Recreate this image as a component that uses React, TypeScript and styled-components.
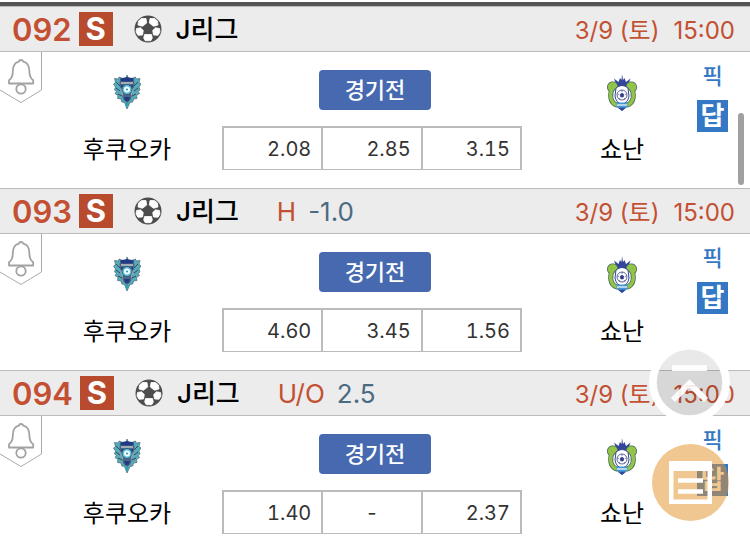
import React from "react";
import styled, { createGlobalStyle } from "styled-components";

const GlobalStyle = createGlobalStyle`
  * { box-sizing: border-box; }
  html { scrollbar-width: none; }
  body {
    margin: 0;
    background: #fff;
    color: #000;
    font-family: Inter, "Noto Sans CJK KR", sans-serif;
  }
  button { font: inherit; padding: 0; border: 0; background: none; cursor: pointer; }
`;

const Page = styled.main`
  padding-top: 2px;
`;

const TopRule = styled.div`
  height: 4px;
  background: #555;
`;

const GameHeader = styled.header`
  display: flex;
  align-items: center;
  height: 46px;
  padding: 0 15px 0 12px;
  background: #ececec;
  border-top: 1px solid #bbb;
  border-bottom: 1px solid #bbb;
  white-space: nowrap;
`;

const GameNumber = styled.span`
  font-size: 31px;
  font-weight: 600;
  color: #c35033;
`;

const SingleMark = styled.span`
  width: 34px;
  height: 34px;
  margin: 0 21px 0 7px;
  background: #b84a2d;
  color: #fff;
  font-size: 31px;
  font-weight: 700;
  line-height: 34px;
  text-align: center;
`;

const League = styled.h2`
  margin: 0 38px 0 14px;
  padding-top: 2px;
  font-size: 26px;
  font-weight: 500;
  line-height: 36px;
`;

const BetType = styled.span`
  margin-right: 12px;
  font-size: 26px;
  color: #c35033;
`;

const BetLine = styled.span`
  font-size: 26px;
  color: #4a6b82;
`;

const Kickoff = styled.time`
  display: flex;
  gap: 14px;
  margin-left: auto;
  padding-top: 4px;
  font-size: 24px;
  line-height: 36px;
  color: #c35033;
`;

const GameBody = styled.div`
  display: grid;
  grid-template-columns: 42px 180fr 300px 172fr 56px;
  height: 136px;
`;

const AlarmButton = styled.button`
  width: 42px;
  height: 52px;
  svg { display: block; }
`;

const Team = styled.div<{ $side: "home" | "away" }>`
  display: flex;
  flex-direction: column;
  align-items: center;
  padding: ${(p) => (p.$side === "home" ? "22px 10px 0 0" : "22px 0 0 28px")};
`;

const Crest = styled.div`
  height: 58px;
`;

const TeamName = styled.span`
  font-size: 24px;
  line-height: 36px;
  white-space: nowrap;
`;

const Center = styled.div`
  display: flex;
  flex-direction: column;
  align-items: center;
  padding-top: 18px;
  gap: 16px;
`;

const StatusButton = styled.button`
  width: 112px;
  height: 40px;
  margin-left: 6px;
  border-radius: 4px;
  background: #4769af;
  color: #fff;
  font-size: 22px;
  font-weight: 500;
  line-height: 40px;
`;

const OddsTable = styled.table`
  width: 100%;
  height: 44px;
  table-layout: fixed;
  border-collapse: separate;
  border-spacing: 0;
  border: solid #bbb;
  border-width: 2px 2px 1px 0;
`;

const Odd = styled.td<{ $empty: boolean }>`
  padding: ${(p) => (p.$empty ? "0" : "0 10px 0 0")};
  border-left: 2px solid #bbb;
  font-size: 20px;
  font-variant-numeric: tabular-nums;
  color: #333;
  text-align: ${(p) => (p.$empty ? "center" : "right")};
`;

const Picks = styled.div`
  display: flex;
  flex-direction: column;
  align-items: flex-start;
  padding: 8px 0 0 3px;
  gap: 8px;
`;

const PickButton = styled.button<{ $filled?: boolean }>`
  width: 31px;
  height: 32px;
  background: ${(p) => (p.$filled ? "#3478c5" : "transparent")};
  color: ${(p) => (p.$filled ? "#fff" : "#3478c5")};
  font-size: ${(p) => (p.$filled ? 26 : 22)}px;
  font-weight: ${(p) => (p.$filled ? 700 : 500)};
  line-height: 30px;
`;

const ScrollThumb = styled.div`
  position: fixed;
  top: 113px;
  right: 6px;
  width: 6px;
  height: 72px;
  border-radius: 3px;
  background: #a0a0a0;
`;

const FloatingButton = styled.button<{ $top?: boolean }>`
  position: fixed;
  right: ${(p) => (p.$top ? 20 : 21)}px;
  bottom: ${(p) => (p.$top ? 120 : 22)}px;
  width: ${(p) => (p.$top ? 81 : 77)}px;
  height: ${(p) => (p.$top ? 81 : 77)}px;
  border-radius: 50%;
  svg { display: block; }
`;

function BellTab() {
  return (
    <svg width="42" height="52" viewBox="0 0 42 52" fill="none">
      <path d="M41.5 0V38L21 50.5 0 38" stroke="#aaa" />
      <g stroke="#a2a2a2" strokeWidth="1.8" strokeLinejoin="round">
        <path d="M9 31.5V28.3Q12.8 25.6 12.8 19.5C12.8 13.5 15 10.6 18.8 9.7Q19.2 8 21 8T23.4 9.7C27.2 10.6 29.4 13.5 29.4 19.5Q29.4 25.6 33.2 28.3V31.5Z" />
        <circle cx="21" cy="37" r="4.7" />
      </g>
    </svg>
  );
}

function SoccerBall() {
  return (
    <svg width="28" height="28" viewBox="0 0 28 28">
      <circle cx="14" cy="14" r="13.5" fill="#4d4d4d" />
      <g fill="#fff" stroke="#fff" strokeWidth=".8" strokeLinejoin="round">
        <path d="M4.500 6 7.500 3.500 12 3.500 12.700 8 8.500 11.300 4 10Z" />
        <path d="M23.500 6 20.500 3.500 16 3.500 15.300 8 19.500 11.300 24 10Z" />
        <path d="M2.500 13.500 6.500 12.800 9.300 15.500 8.500 20 4 20.300 2 17Z" />
        <path d="M25.500 13.500 21.500 12.800 18.700 15.500 19.500 20 24 20.300 26 17Z" />
        <path d="M10.500 19.500h7l.800 3.500-1.500 2.700h-5.600L9.700 23Z" />
      </g>
    </svg>
  );
}

function HomeCrest() {
  return (
    <svg width="28" height="36" viewBox="0 0 28 36">
      <path d="M14 1 15.500 5l4-.800 3-1.200.500 2 4-.500-1 4 2 1.500-2 3 1 3-2 1.500 1.500 2-3 2 .500 3-3.500.500-.800 3-2.700.500L14 35l-2.500-6.500-2.700-.500L8 25l-3.500-.500.500-3-3-2 1.500-2-2-1.500 1-3-2-3 2-1.500-1-4 4 .500 .500-2 3 1.200 4 .800Z" fill="#55adba" stroke="#4c6475" strokeWidth=".7" />
      <path d="M7 5.500 14 4l7 1.500.500 4L20 18l-2.500 8-3.500 3-3.500-3L8 18 6.500 9.500Z" fill="#4f6480" />
      <path d="M7 4.500 14 3l7 1.500-1.500 3h-11ZM8 11l3 1-1 2-2-1ZM20 11l-3 1 1 2 2-1ZM11 23h6l-1.500 4h-3Z" fill="#213a86" />
      <path d="M8 8h12v2H8ZM7 14l3 1.500v7L8 18ZM21 14l-3 1.500v7l2-4.500Z" fill="#a3adb5" />
      <path d="m3 8 4 4M3 14l4 3M5 20l4 2M25 8l-4 4M25 14l-4 3M23 20l-4 2" fill="none" stroke="#34455c" />
      <circle cx="14" cy="15.500" r="5" fill="#63c0d8" stroke="#26618a" />
      <circle cx="14" cy="15.500" r="3" fill="#f1ffff" />
      <circle cx="14" cy="15.500" r="1" fill="#2990a8" />
      <path d="M12 29h4l-2 5Z" fill="#2ba7b4" />
    </svg>
  );
}

function AwayCrest() {
  return (
    <svg width="32" height="38" viewBox="0 0 32 38">
      <path d="M8 4.500 12.500 8 14 4l1.500 2L16 0l1 6 1.500-2 1.500 4 4.500-3.500-3 8H11Z" fill="#34469b" />
      <g fill="none" strokeLinecap="round">
        <path d="M10 13C9 8.500 3 9.500 3.500 13.500c.500 3 4.500 2 3.500 0C3 20 4 29 11 31M22 13c1-4.500 7-3.500 6.500.500-.500 3-4.500 2-3.500 0C29 20 28 29 21 31" stroke="#4a6a58" strokeWidth="5" />
        <path d="M10 13C9 8.500 3 9.500 3.500 13.500c.500 3 4.500 2 3.500 0C3 20 4 29 11 31M22 13c1-4.500 7-3.500 6.500.500-.500 3-4.500 2-3.500 0C29 20 28 29 21 31" stroke="#93c44a" strokeWidth="3.400" />
      </g>
      <path d="M10 14q6-5 12 0l1 8q-1 7-7 8-6-1-7-8Z" fill="#fff" stroke="#34469b" />
      <circle cx="16" cy="21" r="5" fill="#fff" stroke="#303e87" strokeWidth=".8" />
      <path d="m16 19 2 1.600-.8 2.400h-2.400l-.8-2.400ZM16 16v2M20.500 20l-1.500.500M11.500 20l1.500.500M14 24l-1 1.500M18 24l1 1.500" fill="#303e87" stroke="#303e87" strokeWidth=".6" />
      <path d="M10.500 28.500h11v4L16 37l-5.500-4.500Z" fill="#4596d4" />
      <path d="M11 31h10" stroke="#fff" strokeWidth="1.200" />
      <path d="M12 33.800 16 37l4-3.200Z" fill="#34469b" />
    </svg>
  );
}

interface Game {
  no: string;
  type?: string;
  line?: string;
  odds: string[];
}

const games: Game[] = [
  { no: "092", odds: ["2.08", "2.85", "3.15"] },
  { no: "093", type: "H", line: "-1.0", odds: ["4.60", "3.45", "1.56"] },
  { no: "094", type: "U/O", line: "2.5", odds: ["1.40", "-", "2.37"] },
];

function GameRow({ game }: { game: Game }) {
  return (
    <section>
      <GameHeader>
        <GameNumber>{game.no}</GameNumber>
        <SingleMark>S</SingleMark>
        <SoccerBall />
        <League>J리그</League>
        {game.type && <BetType>{game.type}</BetType>}
        {game.line && <BetLine>{game.line}</BetLine>}
        <Kickoff>
          <span>3/9 (토)</span>
          <span>15:00</span>
        </Kickoff>
      </GameHeader>
      <GameBody>
        <AlarmButton aria-label="알림"><BellTab /></AlarmButton>
        <Team $side="home">
          <Crest><HomeCrest /></Crest>
          <TeamName>후쿠오카</TeamName>
        </Team>
        <Center>
          <StatusButton>경기전</StatusButton>
          <OddsTable>
            <tbody>
              <tr>
                {game.odds.map((odd, i) => (
                  <Odd key={i} $empty={odd === "-"}>{odd}</Odd>
                ))}
              </tr>
            </tbody>
          </OddsTable>
        </Center>
        <Team $side="away">
          <Crest><AwayCrest /></Crest>
          <TeamName>쇼난</TeamName>
        </Team>
        <Picks>
          <PickButton>픽</PickButton>
          <PickButton $filled>답</PickButton>
        </Picks>
      </GameBody>
    </section>
  );
}

export default function App() {
  return (
    <>
      <GlobalStyle />
      <Page>
        <TopRule />
        {games.map((game) => <GameRow key={game.no} game={game} />)}
      </Page>
      <ScrollThumb />
      <FloatingButton $top aria-label="맨 위로">
        <svg width="81" height="81" viewBox="0 0 81 81" fill="none">
          <circle cx="40.500" cy="40.500" r="36.500" stroke="#fff" strokeWidth="8" />
          <circle cx="40.500" cy="40.500" r="33" fill="#000" fillOpacity=".085" />
          <path d="M23 26h35M24 58l16.500-16.500L57 58" stroke="#fff" strokeWidth="6" strokeOpacity=".9" />
        </svg>
      </FloatingButton>
      <FloatingButton aria-label="목록">
        <svg width="77" height="77" viewBox="0 0 77 77">
          <circle cx="38.500" cy="38.500" r="38.500" fill="#e29430" fillOpacity=".53" />
          <path fill="#fff" fillRule="evenodd" d="M17 17h43v43H17ZM21.500 27v28.500h34V27Z" />
          <path d="M26 36.500h25M26 47.500h25" stroke="#fff" strokeWidth="4.500" />
        </svg>
      </FloatingButton>
    </>
  );
}
